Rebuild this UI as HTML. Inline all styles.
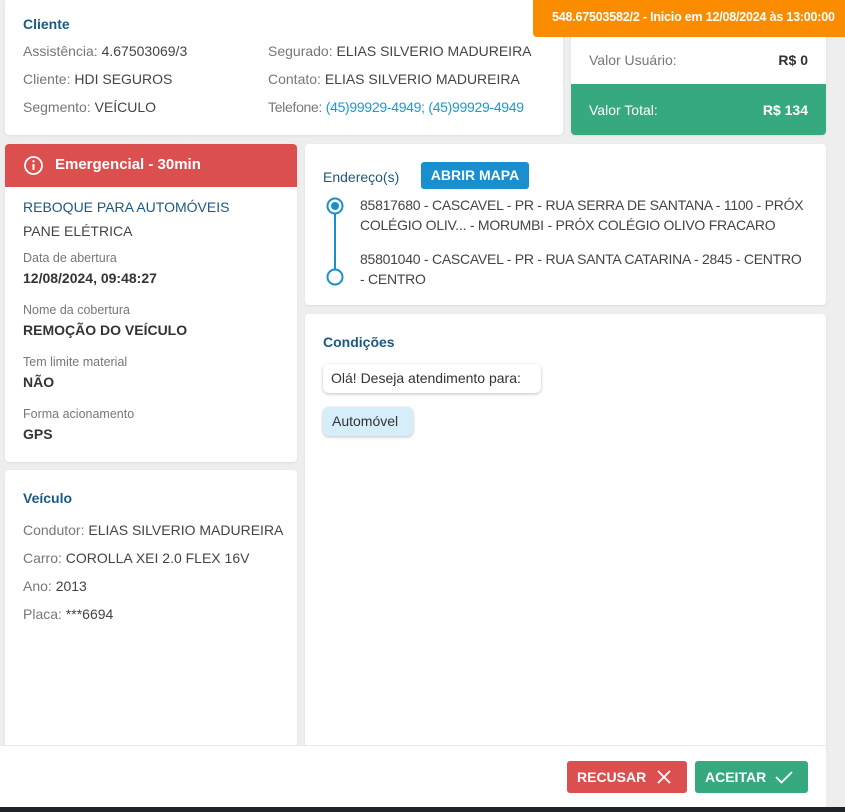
<!DOCTYPE html>
<html><head><meta charset="utf-8"><style>
*{box-sizing:border-box;margin:0;padding:0}
body{width:845px;height:812px;background:#eeeeee;font-family:"Liberation Sans",sans-serif;font-size:14px;color:#444;position:relative;overflow:hidden}
.card{position:absolute;background:#fff;border-radius:4px;box-shadow:0 1px 2px rgba(0,0,0,.08)}
.t{position:absolute;white-space:nowrap}
.h{color:#1b5a80;font-weight:bold;font-size:14px}
.g{color:#777}
.lbl{color:#777;font-size:12.5px}
.b{font-weight:bold;color:#333}
.link{color:#1a9ad6}
</style></head><body>

<div class="card" style="left:5px;top:-4px;width:558px;height:139px">
 <div class="t h" style="left:18px;top:20px">Cliente</div>
 <div class="t" style="left:18px;top:47px"><span class="g">Assistência:</span> 4.67503069/3</div>
 <div class="t" style="left:18px;top:75px"><span class="g">Cliente:</span> HDI SEGUROS</div>
 <div class="t" style="left:18px;top:103px"><span class="g">Segmento:</span> VEÍCULO</div>
 <div class="t" style="left:263px;top:47px"><span class="g">Segurado:</span> ELIAS SILVERIO MADUREIRA</div>
 <div class="t" style="left:263px;top:75px"><span class="g">Contato:</span> ELIAS SILVERIO MADUREIRA</div>
 <div class="t" style="left:263px;top:103px;letter-spacing:-.3px"><span class="g">Telefone:</span> <span class="link">(45)99929-4949; (45)99929-4949</span></div>
</div>

<div class="card" style="left:571px;top:20px;width:255px;height:115px;overflow:hidden">
 <div class="t g" style="left:18px;top:32px">Valor Usuário:</div>
 <div class="t b" style="right:18px;top:32px">R$ 0</div>
 <div style="position:absolute;left:0;top:64px;width:255px;height:51px;background:#36a97f"></div>
 <div class="t" style="left:18px;top:82px;color:#fff">Valor Total:</div>
 <div class="t" style="right:18px;top:82px;color:#fff;font-weight:bold">R$ 134</div>
</div>

<div style="position:absolute;left:533px;top:-4px;width:320px;height:41px;background:#fb8c00;border-radius:4px"></div>
<div class="t" style="left:552px;top:10px;color:#fff;font-size:12.5px;font-weight:bold;letter-spacing:-.2px">548.67503582/2 - Inicio em 12/08/2024 às 13:00:00</div>

<div class="card" style="left:5px;top:144px;width:292px;height:318px;overflow:hidden">
 <div style="position:absolute;left:0;top:0;width:292px;height:43px;background:#dc4f4f"></div>
 <svg class="t" style="left:18px;top:11px" width="21" height="21" viewBox="0 0 21 21"><circle cx="10.5" cy="10.5" r="8.5" fill="none" stroke="#fff" stroke-width="1.8"/><line x1="10.5" y1="9" x2="10.5" y2="15" stroke="#fff" stroke-width="2"/><circle cx="10.5" cy="6.3" r="1.2" fill="#fff"/></svg>
 <div class="t" style="left:50px;top:12px;color:#fff;font-weight:bold;font-size:15px">Emergencial - 30min</div>
 <div class="t h" style="left:18px;top:55px;font-weight:normal;color:#1b5a80">REBOQUE PARA AUTOMÓVEIS</div>
 <div class="t" style="left:18px;top:79px">PANE ELÉTRICA</div>
 <div class="t lbl" style="left:18px;top:107px">Data de abertura</div>
 <div class="t b" style="left:18px;top:126px">12/08/2024, 09:48:27</div>
 <div class="t lbl" style="left:18px;top:159px">Nome da cobertura</div>
 <div class="t b" style="left:18px;top:178px">REMOÇÃO DO VEÍCULO</div>
 <div class="t lbl" style="left:18px;top:211px">Tem limite material</div>
 <div class="t b" style="left:18px;top:230px">NÃO</div>
 <div class="t lbl" style="left:18px;top:263px">Forma acionamento</div>
 <div class="t b" style="left:18px;top:282px">GPS</div>
</div>

<div class="card" style="left:5px;top:470px;width:292px;height:290px">
 <div class="t h" style="left:18px;top:20px">Veículo</div>
 <div class="t" style="left:18px;top:52px"><span class="g">Condutor:</span> ELIAS SILVERIO MADUREIRA</div>
 <div class="t" style="left:18px;top:80px"><span class="g">Carro:</span> COROLLA XEI 2.0 FLEX 16V</div>
 <div class="t" style="left:18px;top:108px"><span class="g">Ano:</span> 2013</div>
 <div class="t" style="left:18px;top:136px"><span class="g">Placa:</span> ***6694</div>
</div>

<div class="card" style="left:305px;top:144px;width:521px;height:161px">
 <div class="t h" style="left:18px;top:25px;font-weight:normal">Endereço(s)</div>
 <div style="position:absolute;left:116px;top:18px;width:108px;height:27px;background:#1a8fcf;border-radius:3px;color:#fff;font-weight:bold;font-size:14px;text-align:center;line-height:27px">ABRIR MAPA</div>
 <svg class="t" style="left:20px;top:52px" width="20" height="92"><line x1="10" y1="10" x2="10" y2="80" stroke="#1a8fcf" stroke-width="2"/><circle cx="10" cy="10" r="7.5" fill="#fff" stroke="#1a8fcf" stroke-width="2"/><circle cx="10" cy="10" r="4" fill="#1a8fcf"/><circle cx="10" cy="81" r="7.5" fill="#fff" stroke="#1a8fcf" stroke-width="2"/></svg>
 <div class="t" style="left:55px;top:51px;line-height:20px;font-size:14px;letter-spacing:-.25px">85817680 - CASCAVEL - PR - RUA SERRA DE SANTANA - 1100 - PRÓX<br>COLÉGIO OLIV... - MORUMBI - PRÓX COLÉGIO OLIVO FRACARO</div>
 <div class="t" style="left:55px;top:105px;line-height:20px;font-size:14px;letter-spacing:-.25px">85801040 - CASCAVEL - PR - RUA SANTA CATARINA - 2845 - CENTRO<br>- CENTRO</div>
</div>

<div class="card" style="left:305px;top:314px;width:521px;height:440px">
 <div class="t h" style="left:18px;top:20px">Condições</div>
 <div style="position:absolute;left:18px;top:50px;width:218px;height:29px;border-radius:6px;box-shadow:0 1px 3px rgba(0,0,0,.25);background:#fff;line-height:29px;padding-left:8px;color:#333;white-space:nowrap">Olá! Deseja atendimento para:</div>
 <div style="position:absolute;left:18px;top:93px;width:90px;height:29px;border-radius:6px;box-shadow:0 1px 3px rgba(0,0,0,.25);background:#d6eef9;line-height:29px;padding-left:9px;color:#333">Automóvel</div>
</div>

<div style="position:absolute;left:0;top:745px;width:826px;height:62px;background:#fff;border-top:1px solid #e8e8e8"></div>
<div style="position:absolute;left:567px;top:761px;width:120px;height:32px;background:#dc4f4f;border-radius:3px;color:#fff;font-weight:bold;font-size:14px;line-height:32px;padding-left:10px">RECUSAR
 <svg style="position:absolute;left:90px;top:9px" width="14" height="14"><path d="M1 1L13 13M13 1L1 13" stroke="#fff" stroke-width="1.8"/></svg></div>
<div style="position:absolute;left:695px;top:761px;width:113px;height:32px;background:#36a97f;border-radius:3px;color:#fff;font-weight:bold;font-size:14px;line-height:32px;padding-left:10px">ACEITAR
 <svg style="position:absolute;left:80px;top:9px" width="18" height="14"><path d="M1 7L6.5 12.5L17 2" fill="none" stroke="#fff" stroke-width="1.8"/></svg></div>
<div style="position:absolute;left:0;top:807px;width:845px;height:5px;background:#1f2326"></div>
</body></html>
